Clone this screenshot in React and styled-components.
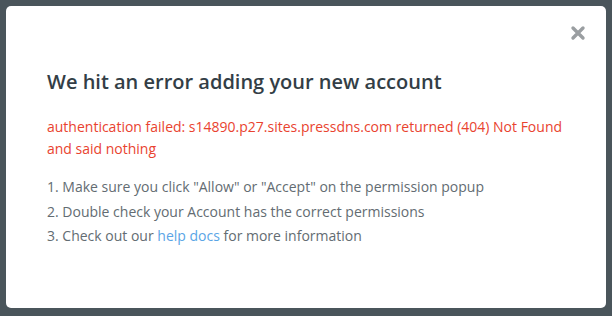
import styled, { createGlobalStyle } from "styled-components";

const GlobalStyle = createGlobalStyle`
  html, body {
    margin: 0;
    padding: 0;
    background: #4a555b;
    font-family: "Open Sans", "Liberation Sans", sans-serif;
  }
`;

const Overlay = styled.div`
  width: 612px;
  height: 316px;
  padding: 6px 6px 8px 6px;
  box-sizing: border-box;
  background: #4a555b;
`;

const Modal = styled.div`
  position: relative;
  height: 100%;
  background: #fff;
  border-radius: 5px;
  padding: 62px 40px 0 41px;
  box-sizing: border-box;
`;

const Close = styled.button`
  position: absolute;
  top: 17px;
  right: 18px;
  width: 20px;
  height: 20px;
  padding: 0;
  border: none;
  background: none;
  cursor: pointer;
  display: flex;
  align-items: center;
  justify-content: center;
`;

const Title = styled.h2`
  margin: 0 0 20px;
  font-size: 20px;
  font-weight: 600;
  line-height: 28px;
  color: #333e46;
`;

const Error = styled.p`
  margin: 0 0 15px;
  font-size: 14px;
  line-height: 22px;
  color: #e9432f;
`;

const Steps = styled.ol`
  margin: 0;
  padding: 0;
  list-style: none;
`;

const Step = styled.li`
  font-size: 14px;
  line-height: 24.5px;
  color: #636c72;
`;

const Link = styled.a`
  color: #5aa5e6;
  text-decoration: none;
`;

export default function App() {
  return (
    <>
      <GlobalStyle />
      <Overlay>
        <Modal>
          <Close aria-label="Close">
            <svg width="16" height="16" viewBox="0 0 16 16">
              <path d="M3 3 L13 13 M13 3 L3 13" stroke="#9a9ea1" strokeWidth="3.4" strokeLinecap="round" />
            </svg>
          </Close>
          <Title>We hit an error adding your new account</Title>
          <Error>
            authentication failed: s14890.p27.sites.pressdns.com returned (404) Not Found and said nothing
          </Error>
          <Steps>
            <Step>1. Make sure you click "Allow" or "Accept" on the permission popup</Step>
            <Step>2. Double check your Account has the correct permissions</Step>
            <Step>
              3. Check out our <Link href="#">help docs</Link> for more information
            </Step>
          </Steps>
        </Modal>
      </Overlay>
    </>
  );
}
